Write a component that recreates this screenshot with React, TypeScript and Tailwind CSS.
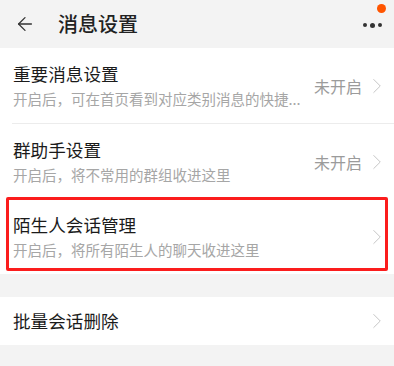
import { ArrowLeft, ChevronRight } from 'lucide-react'

const font = { fontFamily: '"Noto Sans CJK SC", "Noto Sans", sans-serif' }

interface RowProps {
  title: string
  desc?: string
  status?: string
  highlight?: boolean
}

function Row({ title, desc, status, highlight }: RowProps) {
  return (
    <div className={`relative flex items-center pl-[13px] pr-[4px] ${desc ? 'h-[75px]' : 'h-[48px]'}`}>
      <div className="min-w-0 flex-1">
        <div className="text-[17.6px] leading-[24px] text-[#1b1b1b]">{title}</div>
        {desc && (
          <div className="mt-[3px] overflow-hidden whitespace-nowrap text-[14.5px] leading-[20px] text-[#a6a6a6]">{desc}</div>
        )}
      </div>
      {status && <span className="ml-[6px] shrink-0 text-[16px] text-[#9b9b9b]">{status}</span>}
      <ChevronRight size={26} strokeWidth={0.8} className="ml-[2px] shrink-0 text-[#bdbdbd]" />
      {highlight && (
        <div className="pointer-events-none absolute -top-[2px] bottom-[3px] left-[6px] right-[6px] rounded-[2px] border-[3px] border-[#fb1d1d]" />
      )}
    </div>
  )
}

export default function App() {
  return (
    <div className="h-[366px] w-[394px] overflow-hidden bg-[#f3f3f3]" style={font}>
      <div className="relative flex h-[48px] items-center">
        <ArrowLeft size={22} strokeWidth={1.4} className="ml-[14px] text-[#333]" />
        <span className="ml-[22px] text-[20px] font-medium text-[#222]">消息设置</span>
        <div className="ml-auto mr-[12px] flex items-center gap-[3px] pt-[2px]">
          <span className="h-[4px] w-[4px] rounded-full bg-[#333]" />
          <span className="h-[5px] w-[5px] rounded-full bg-[#333]" />
          <span className="h-[4px] w-[4px] rounded-full bg-[#333]" />
        </div>
        <span className="absolute right-[8px] top-[4px] h-[9px] w-[9px] rounded-full bg-[#ff5500]" />
      </div>
      <div className="bg-white">
        <Row title="重要消息设置" desc="开启后，可在首页看到对应类别消息的快捷..." status="未开启" />
        <div className="ml-[12px] h-px bg-[#ececec]" />
        <Row title="群助手设置" desc="开启后，将不常用的群组收进这里" status="未开启" />
        <Row title="陌生人会话管理" desc="开启后，将所有陌生人的聊天收进这里" highlight />
      </div>
      <div className="mt-[23px] bg-white">
        <Row title="批量会话删除" />
      </div>
    </div>
  )
}
